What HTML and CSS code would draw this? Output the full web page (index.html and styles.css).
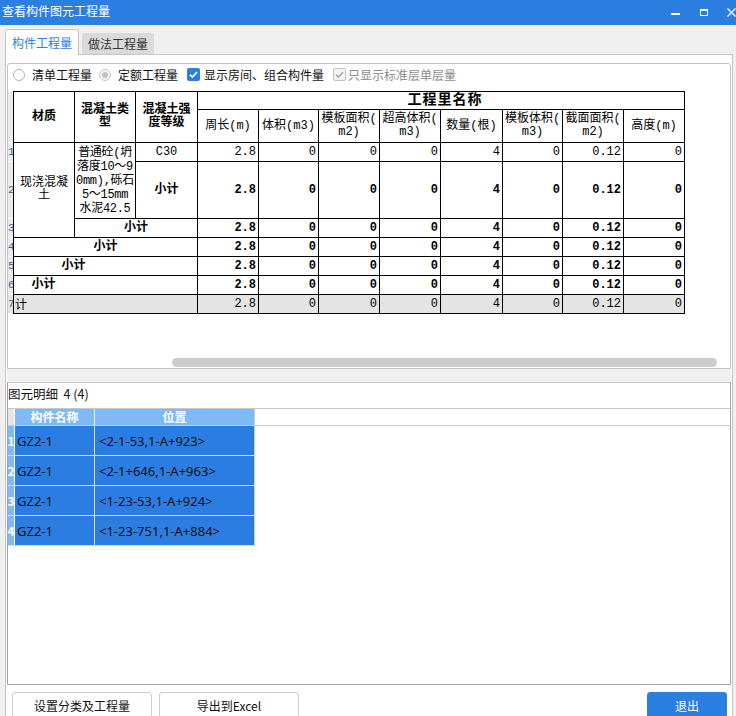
FILE: index.html
```html
<!DOCTYPE html>
<html lang="zh-CN">
<head>
<meta charset="utf-8">
<title>查看构件图元工程量</title>
<link rel="stylesheet" href="styles.css">
</head>
<body>
<div class="window">
  <header class="titlebar">
    <span class="title">查看构件图元工程量</span>
    <div class="winctl">
      <svg class="w-min" width="9" height="25" viewBox="0 0 9 25"><rect x="0" y="13" width="9" height="2" fill="#fff"/></svg>
      <svg class="w-max" width="8" height="25" viewBox="0 0 8 25"><rect x="0.5" y="9.5" width="7" height="6" fill="none" stroke="#fff" stroke-width="1"/><rect x="0" y="9" width="8" height="2" fill="#fff"/></svg>
      <svg class="w-close" width="9" height="25" viewBox="0 0 9 25"><path d="M0.5 8.5 L8.5 16.5 M8.5 8.5 L0.5 16.5" stroke="#fff" stroke-width="1.3" fill="none"/></svg>
    </div>
  </header>

  <nav class="tabs">
    <div class="tab active">构件工程量</div>
    <div class="tab">做法工程量</div>
  </nav>

  <main class="panel">
    <section class="upper">
      <div class="options">
        <label class="opt o1"><span class="radio"></span><span class="lbl">清单工程量</span></label>
        <label class="opt o2"><span class="radio dis"><span class="dot"></span></span><span class="lbl">定额工程量</span></label>
        <label class="opt o3"><span class="cb on"><svg width="13" height="13" viewBox="0 0 13 13"><path d="M3 6.6 L5.4 9 L10 4.2" stroke="#fff" stroke-width="1.7" fill="none"/></svg></span><span class="lbl">显示房间、组合构件量</span></label>
        <label class="opt o4"><span class="cb off"><svg width="11" height="11" viewBox="0 0 11 11"><path d="M2 5.6 L4.4 8 L9 3.2" stroke="#a9a9a9" stroke-width="1.6" fill="none"/></svg></span><span class="lbl grey">只显示标准层单层量</span></label>
      </div>

      <div class="gridwrap">
        <div class="gridrow">
          <div class="rowidx">
            <div class="ix rs2"></div>
            <div class="ix">1</div>
            <div class="ix">2</div>
            <div class="ix">3</div>
            <div class="ix">4</div>
            <div class="ix">5</div>
            <div class="ix">6</div>
            <div class="ix tot">7</div>
          </div>
          <div class="qty">
            <div class="c h rs2">材质</div>
            <div class="c h rs2">混凝土类<br>型</div>
            <div class="c h rs2">混凝土强<br>度等级</div>
            <div class="c h cs8 big">工程里名称</div>
            <div class="c hn">周长(m)</div>
            <div class="c hn">体积(m3)</div>
            <div class="c hn">模板面积(<br>m2)</div>
            <div class="c hn">超高体积(<br>m3)</div>
            <div class="c hn">数量(根)</div>
            <div class="c hn">模板体积(<br>m3)</div>
            <div class="c hn">截面面积(<br>m2)</div>
            <div class="c hn">高度(m)</div>

            <div class="c t rs3">现浇混凝<br>土</div>
            <div class="c t rs2 desc">普通砼(坍<br>落度10～9<br>0mm),砾石<br>5～15mm<br>水泥42.5</div>
            <div class="c t">C30</div>
            <div class="c n">2.8</div><div class="c n">0</div><div class="c n">0</div><div class="c n">0</div><div class="c n">4</div><div class="c n">0</div><div class="c n">0.12</div><div class="c n">0</div>

            <div class="c t b">小计</div>
            <div class="c n b">2.8</div><div class="c n b">0</div><div class="c n b">0</div><div class="c n b">0</div><div class="c n b">4</div><div class="c n b">0</div><div class="c n b">0.12</div><div class="c n b">0</div>

            <div class="c t b cs2">小计</div>
            <div class="c n b">2.8</div><div class="c n b">0</div><div class="c n b">0</div><div class="c n b">0</div><div class="c n b">4</div><div class="c n b">0</div><div class="c n b">0.12</div><div class="c n b">0</div>

            <div class="c t b cs3">小计</div>
            <div class="c n b">2.8</div><div class="c n b">0</div><div class="c n b">0</div><div class="c n b">0</div><div class="c n b">4</div><div class="c n b">0</div><div class="c n b">0.12</div><div class="c n b">0</div>

            <div class="c t b cs3 in1">小计</div>
            <div class="c n b">2.8</div><div class="c n b">0</div><div class="c n b">0</div><div class="c n b">0</div><div class="c n b">4</div><div class="c n b">0</div><div class="c n b">0.12</div><div class="c n b">0</div>

            <div class="c t b cs3 in2">小计</div>
            <div class="c n b">2.8</div><div class="c n b">0</div><div class="c n b">0</div><div class="c n b">0</div><div class="c n b">4</div><div class="c n b">0</div><div class="c n b">0.12</div><div class="c n b">0</div>

            <div class="c tot cs3 lft">计</div>
            <div class="c n tot">2.8</div><div class="c n tot">0</div><div class="c n tot">0</div><div class="c n tot">0</div><div class="c n tot">4</div><div class="c n tot">0</div><div class="c n tot">0.12</div><div class="c n tot">0</div>
          </div>
        </div>
        <div class="hscroll"><div class="thumb"></div></div>
      </div>
    </section>

    <div class="split"></div>

    <section class="lower">
      <div class="ltitle">图元明细&nbsp;&nbsp;4 (4)</div>
      <div class="lgrid">
        <div class="lhead"><div class="li"></div><div class="l1">构件名称</div><div class="l2">位置</div></div>
        <div class="lrow"><div class="li">1</div><div class="l1">GZ2-1</div><div class="l2">&lt;2-1-53,1-A+923&gt;</div></div>
        <div class="lrow"><div class="li">2</div><div class="l1">GZ2-1</div><div class="l2">&lt;2-1+646,1-A+963&gt;</div></div>
        <div class="lrow"><div class="li">3</div><div class="l1">GZ2-1</div><div class="l2">&lt;1-23-53,1-A+924&gt;</div></div>
        <div class="lrow"><div class="li">4</div><div class="l1">GZ2-1</div><div class="l2">&lt;1-23-751,1-A+884&gt;</div></div>
      </div>
    </section>

    <div class="actions">
      <button class="btn">设置分类及工程量</button>
      <button class="btn">导出到Excel</button>
      <button class="btn primary">退出</button>
    </div>
  </main>
</div>
</body>
</html>
```

FILE: styles.css
```css
* { box-sizing: border-box; }
html, body { margin: 0; padding: 0; }
body {
  width: 736px;
  height: 716px;
  overflow: hidden;
  background: #f0f0f0;
  font-family: "Noto Sans CJK SC", "Noto Sans", sans-serif;
  font-size: 12px;
  color: #111;
}
.window {
  width: 736px;
  height: 716px;
  display: flex;
  flex-direction: column;
}

/* title bar */
.titlebar {
  height: 25px;
  flex: none;
  background: #2c7fe0;
  color: #fff;
  display: flex;
  align-items: flex-start;
}
.title {
  padding-left: 2px;
  line-height: 22px;
  font-size: 12px;
}
.winctl {
  margin-left: auto;
  display: flex;
}
.winctl svg { display: block; }
.w-min { margin-right: 20px; }
.w-max { margin-right: 19px; }

/* tabs */
.tabs {
  height: 30px;
  flex: none;
  width: 728px;
  margin-left: 5px;
  display: flex;
  align-items: flex-end;
  border-bottom: 1px solid #c6c6c6;
}
.tab {
  width: 72px;
  height: 21px;
  margin-left: 3px;
  background: #dadada;
  color: #333;
  border-radius: 2px 2px 0 0;
  display: flex;
  align-items: center;
  justify-content: center;
}
.tab.active {
  width: 74px;
  height: 26px;
  margin-left: 0;
  margin-bottom: -1px;
  background: #fff;
  color: #2b7fe0;
  border: 1px solid #c6c6c6;
  border-bottom: 0;
  border-radius: 3px 3px 0 0;
}

/* panel */
.panel {
  flex: 1;
  width: 728px;
  margin-left: 5px;
  background: #fff;
  border-left: 1px solid #c6c6c6;
  border-right: 1px solid #c6c6c6;
  padding-top: 8px;
  display: flex;
  flex-direction: column;
  min-height: 0;
}

.upper {
  flex: none;
  width: 724px;
  height: 306px;
  margin-left: 1px;
  border: 1px solid #c4c4c4;
  border-radius: 3px 3px 0 0;
  display: flex;
  flex-direction: column;
}

.options {
  height: 25px;
  flex: none;
  padding-bottom: 4px;
  display: flex;
  align-items: center;
}
.opt { display: flex; align-items: center; color: #111; }
.o1 { margin-left: 5px; }
.o2 { margin-left: 7px; }
.o3 { margin-left: 9px; }
.o4 { margin-left: 9px; }
.radio {
  width: 12px;
  height: 12px;
  border-radius: 50%;
  border: 1px solid #b4b4b4;
  background: #fff;
  display: flex;
  align-items: center;
  justify-content: center;
  margin-right: 7px;
}
.radio.dis { border-color: #c8c8c8; background: #f4f4f4; }
.radio .dot { width: 6px; height: 6px; border-radius: 50%; background: #c4c4c4; }
.cb {
  width: 13px;
  height: 13px;
  border-radius: 2px;
  display: flex;
  align-items: center;
  justify-content: center;
}
.cb svg { display: block; }
.cb.on { background: #2b7fe0; margin-right: 4px; }
.cb.off { border: 1px solid #c4c4c4; background: #f4f4f4; margin-right: 2px; }
.lbl.grey { color: #8c8c8c; }

.gridwrap {
  flex: 1;
  display: flex;
  flex-direction: column;
  padding-top: 2px;
}
.gridrow { display: flex; align-items: flex-start; }

.rowidx {
  width: 5px;
  padding-top: 1px;
  display: grid;
  grid-template-rows: 17px 32px 18px 56px 18px 18px 18px 18px 18px;
  row-gap: 1px;
}
.ix {
  background: #ebebeb;
  font-family: "Liberation Mono", monospace;
  font-size: 11px;
  color: #3b5ca0;
  display: flex;
  align-items: center;
  overflow: visible;
  white-space: nowrap;
}
.ix.tot { background: #e4e4e4; }

.qty {
  display: grid;
  grid-template-columns: 60px 60px 61px 60px 59px 60px 60px 61px 59px 60px 60px;
  grid-template-rows: 17px 32px 18px 56px 18px 18px 18px 18px 18px;
  gap: 1px;
  padding: 1px;
  background: #000;
  font-family: "Liberation Mono", "Noto Sans CJK SC", monospace;
  font-size: 12px;
  color: #000;
}
.c {
  background: #fff;
  display: flex;
  align-items: center;
  white-space: nowrap;
  overflow: visible;
}
.rs2 { grid-row: span 2; }
.rs3 { grid-row: span 3; }
.cs2 { grid-column: span 2; }
.cs3 { grid-column: span 3; }
.cs8 { grid-column: span 8; }
.h, .hn, .t {
  justify-content: center;
  text-align: center;
  line-height: 13px;
}
.h { font-weight: bold; }
.h.big { font-size: 14px; letter-spacing: 1px; padding-left: 8px; }
.desc { line-height: 14px; letter-spacing: -0.3px; }
.n { justify-content: flex-end; padding-right: 2px; }
.b { font-weight: bold; }
.in1 { padding-right: 64px; }
.in2 { padding-right: 124px; }
.tot { background: #e4e4e4; }
.lft { justify-content: flex-start; padding-left: 1px; }

.hscroll {
  margin-top: auto;
  margin-bottom: 1px;
  height: 9px;
}
.thumb {
  margin-left: 164px;
  width: 545px;
  height: 9px;
  border-radius: 5px;
  background: #cdcdcd;
}

.split {
  flex: none;
  height: 13px;
  width: 724px;
  margin-left: 1px;
  background: #f0f0f0;
}

/* lower panel */
.lower {
  flex: none;
  width: 724px;
  height: 303px;
  margin-left: 1px;
  border: 1px solid #a4a4a4;
  border-top-color: #c8c8c8;
  display: flex;
  flex-direction: column;
  background: #fff;
}
.ltitle {
  height: 25px;
  line-height: 21px;
  color: #111;
  font-size: 12.5px;
}
.lgrid { border-top: 1px solid #c8c8c8; }
.lhead {
  height: 17px;
  display: flex;
  border-bottom: 1px solid #cccccc;
}
.lhead .li { width: 7px; background: #e4e4e4; border-right: 1px solid #fff; }
.lhead .l1, .lhead .l2 {
  background: #80b9f7;
  color: #fff;
  font-weight: bold;
  display: flex;
  align-items: center;
  justify-content: center;
  line-height: 16px;
}
.lhead .l1 { width: 80px; border-right: 1px solid #e6eef8; }
.lhead .l2 { width: 160px; border-right: 1px solid #cccccc; }
.lrow {
  height: 30px;
  display: flex;
  width: fit-content;
  border-bottom: 1px solid #dcdcdc;
}
.lrow .li {
  width: 7px;
  background: #80b9f7;
  color: #fff;
  font-weight: bold;
  font-size: 12px;
  border-right: 1px solid #fff;
  display: flex;
  align-items: center;
  justify-content: center;
}
.lrow .l1, .lrow .l2 {
  background: #2b7de1;
  color: #111;
  font-family: "Noto Sans", "Noto Sans CJK SC", sans-serif;
  font-size: 13px;
  display: flex;
  align-items: center;
}
.lrow .l1 { width: 80px; padding-left: 2px; border-right: 1px solid #dcdcdc; }
.lrow .l2 { width: 160px; padding-left: 4px; border-right: 1px solid #cccccc; }

/* buttons */
.actions {
  flex: none;
  display: flex;
  gap: 7px;
  padding: 7px 5px 0 6px;
}
.btn {
  width: 140px;
  height: 26px;
  background: #fff;
  border: 1px solid #cccccc;
  border-radius: 3px;
  font-family: "Noto Sans CJK SC", "Noto Sans", sans-serif;
  font-size: 12px;
  color: #111;
  padding: 0;
}
.btn.primary {
  width: 80px;
  margin-left: auto;
  background: #2b7fe0;
  border-color: #2b7fe0;
  color: #fff;
}
```
